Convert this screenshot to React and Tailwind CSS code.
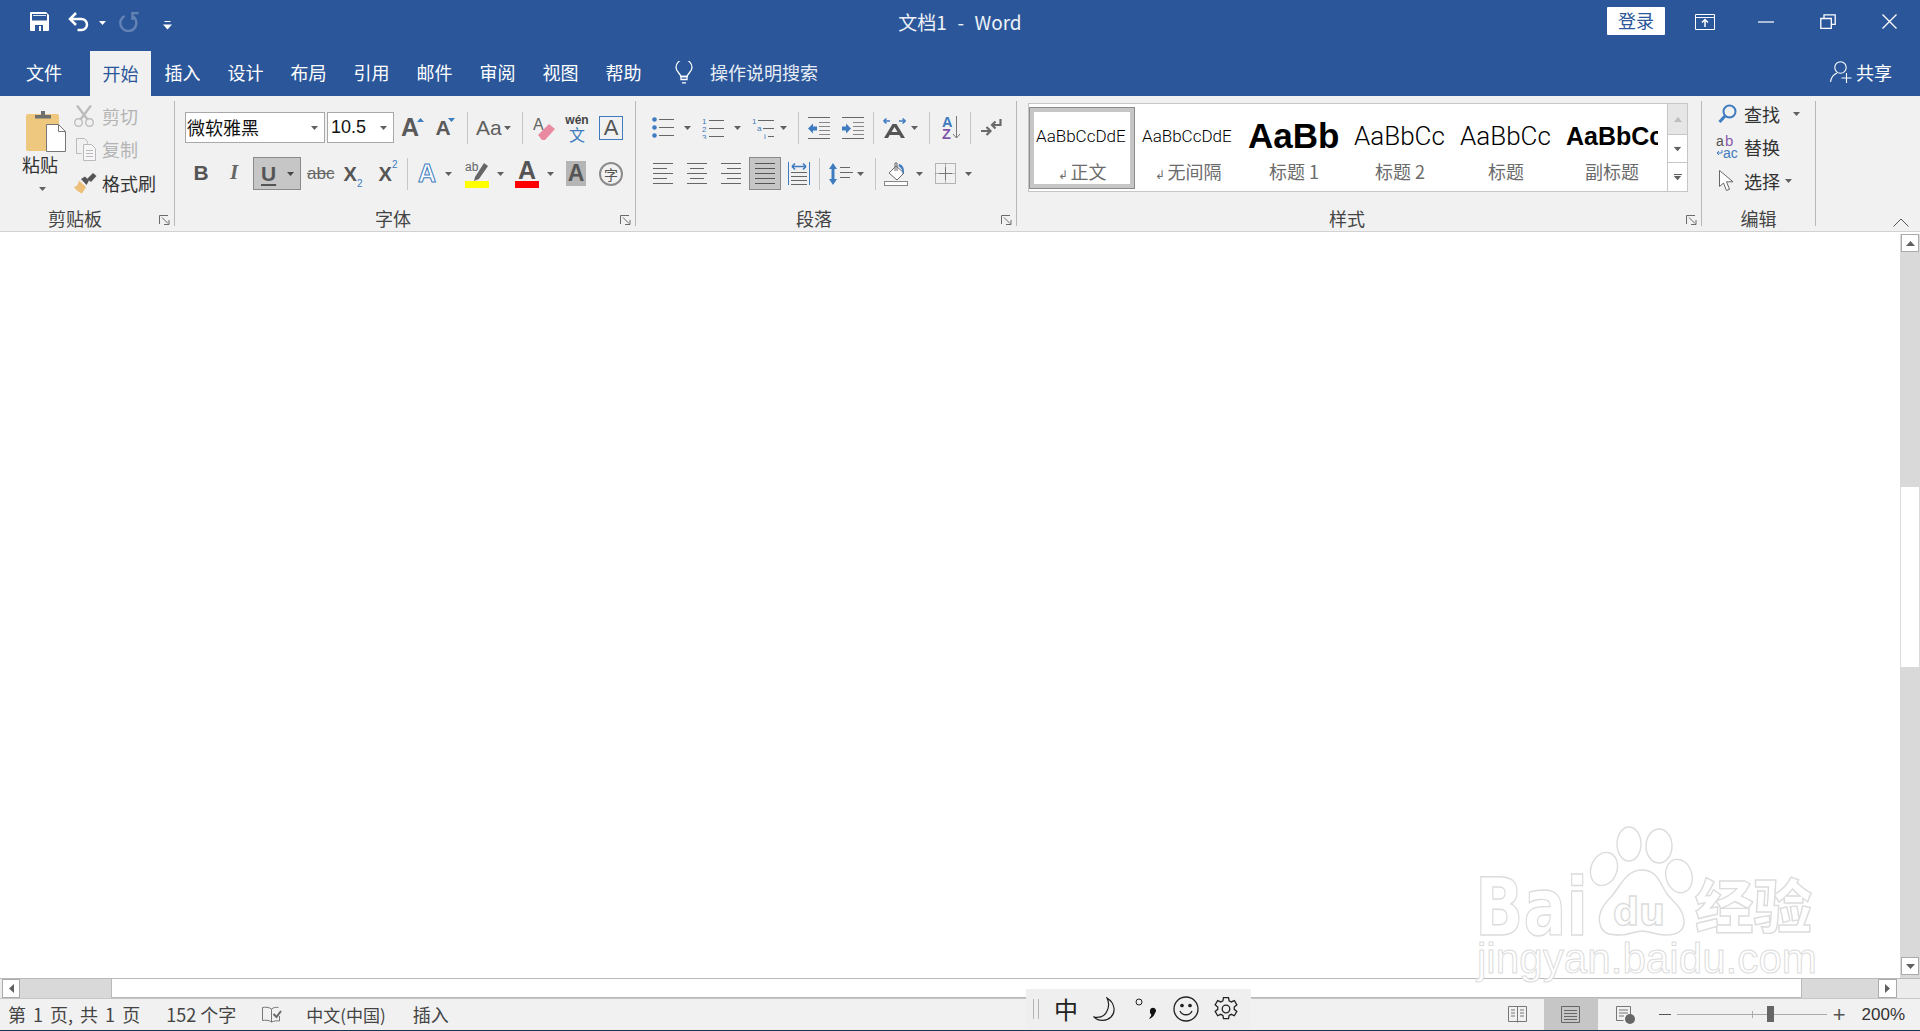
import React from "react";

const Caret = ({ className = "", color = "#606060" }) => (
  <svg width="7" height="4" viewBox="0 0 7 4" className={`shrink-0 ${className}`}>
    <path d="M0 0h7L3.5 4z" fill={color} />
  </svg>
);

const Sep = ({ className = "" }) => <div className={`w-px h-[32px] bg-[#c6c6c6] shrink-0 ${className}`} />;

const Launcher = () => (
  <svg width="11" height="10" viewBox="0 0 11 10" className="absolute right-[4px] top-[8px]">
    <path d="M.5 9V.5H9M3 2.5l6 6M5 9.5h5V5" fill="none" stroke="#6a6a6a" />
  </svg>
);

// one ribbon section with its caption at the bottom
function Group({ label, launcher, className, children }) {
  return (
    <div className={`h-[125px] mt-[5px] border-r border-[#b8b8b8] flex flex-col shrink-0 ${className}`}>
      {children}
      <div className={`relative mt-auto mb-[-3px] h-[22px] leading-[22px] text-center text-[18px] text-[#444] ${launcher ? "pr-[24px]" : ""}`}>
        {label}
        {launcher && <Launcher />}
      </div>
    </div>
  );
}

// horizontal rules used by the list and align icons
function Lines({ w = 20, h = 21, rows, color = "#666" }) {
  return (
    <svg width={w} height={h} viewBox={`0 0 ${w} ${h}`} className="shrink-0">
      {rows.map(([x1, x2, y], i) => (
        <path key={i} d={`M${x1} ${y + 0.5}H${x2}`} stroke={color} />
      ))}
    </svg>
  );
}

const leftRows = [[0, 20, 0], [0, 14, 5], [0, 20, 10], [0, 14, 15], [0, 20, 20]];
const centerRows = [[0, 20, 0], [3, 17, 5], [0, 20, 10], [3, 17, 15], [0, 20, 20]];
const rightRows = [[0, 20, 0], [6, 20, 5], [0, 20, 10], [6, 20, 15], [0, 20, 20]];

const Bullets = () => (
  <svg width="22" height="21" viewBox="0 0 22 21" className="shrink-0">
    {[2.5, 10.5, 18.5].map((y) => (
      <g key={y}>
        <circle cx="2.5" cy={y} r="2.3" fill="#3f7cbf" />
        <path d={`M7 ${y}H22`} stroke="#666" />
      </g>
    ))}
  </svg>
);

const Numbered = () => (
  <svg width="22" height="22" viewBox="0 0 22 22" className="shrink-0">
    {["1", "2", "3"].map((n, i) => (
      <g key={n}>
        <text x="0" y={6.5 + i * 8} fontSize="8" fontFamily="Liberation Sans" fill="#3f7cbf">{n}</text>
        <path d={`M7 ${3.5 + i * 8}H22`} stroke="#666" />
      </g>
    ))}
  </svg>
);

const Multilevel = () => (
  <svg width="22" height="22" viewBox="0 0 22 22" className="shrink-0">
    <text x="0" y="7" fontSize="8" fontFamily="Liberation Sans" fill="#3f7cbf">1</text>
    <path d="M6 3.5H22" stroke="#666" />
    <text x="5" y="14" fontSize="8" fontFamily="Liberation Sans" fill="#3f7cbf">a</text>
    <path d="M11 11.5H22" stroke="#666" />
    <text x="12" y="21.5" fontSize="8" fontFamily="Liberation Sans" fill="#3f7cbf">i</text>
    <path d="M16 19.5H22" stroke="#666" />
  </svg>
);

const Indent = ({ flip }) => (
  <svg width="22" height="22" viewBox="0 0 22 22" className="shrink-0">
    {[0.5, 21.5].map((y) => <path key={y} d={`M0 ${y}H22`} stroke="#666" />)}
    {[5.5, 9.5, 13.5, 17.5].map((y) => <path key={y} d={`M11 ${y}H22`} stroke="#888" />)}
    {flip ? (
      <path d="M0 9.5h4V6.5l5 5-5 5v-3H0z" fill="#3f7cbf" />
    ) : (
      <path d="M9 9.5H5V6.5l-5 5 5 5v-3h4z" fill="#3f7cbf" />
    )}
  </svg>
);

const TextDir = () => (
  <svg width="23" height="22" viewBox="0 0 23 22" className="shrink-0">
    <path d="M1 4h6M0.5 4l3-2.5M0.5 4l3 2.5M16 4h6.5M22.5 4l-3-2.5M22.5 4l-3 2.5" stroke="#3f7cbf" strokeWidth="1.6" fill="none" />
    <path d="M1 21L9.5 7h4L22 21h-4l-1.7-3H6.7L5 21zM8.5 15h6l-3-5z" fill="#555" />
  </svg>
);

const Sort = () => (
  <svg width="19" height="25" viewBox="0 0 19 25" className="shrink-0">
    <text x="0" y="11.500" fontSize="14.500" fontWeight="700" fontFamily="Liberation Sans" fill="#3f7cbf">A</text>
    <text x="0" y="24" fontSize="14.500" fontWeight="700" fontFamily="Liberation Sans" fill="#7f54a8">Z</text>
    <path d="M14.500 1v22M11 19l3.500 4 3.500-4" fill="none" stroke="#777" />
  </svg>
);

const ShowMarks = () => (
  <svg width="21" height="20" viewBox="0 0 21 20" className="shrink-0">
    <path d="M19.5 1v6H11M14.5 3.5L11 7l3.5 3.5" fill="none" stroke="#6a6a6a" strokeWidth="2.2" />
    <path d="M0 13h9M5.5 9l4 4-4 4" fill="none" stroke="#6a6a6a" strokeWidth="2.2" />
  </svg>
);

const Distributed = () => (
  <svg width="22" height="23" viewBox="0 0 22 23" className="shrink-0">
    <path d="M.5 0v23M21.5 0v23" stroke="#3f7cbf" />
    <path d="M4 4.5h14M4 4.5l3-3M4 4.5l3 3M18 4.5l-3-3M18 4.5l-3 3" fill="none" stroke="#3f7cbf" strokeWidth="1.6" />
    {[10.5, 14.5, 18.5, 22.5].map((y) => <path key={y} d={`M3 ${y}H19`} stroke="#666" />)}
  </svg>
);

const LineSpacing = () => (
  <svg width="24" height="24" viewBox="0 0 24 24" className="shrink-0">
    <path d="M4 1l4 6H5.5v10H8l-4 6-4-6h2.5V7H0z" fill="#3f7cbf" />
    {[5.5, 10.5, 15.5].map((y, i) => <path key={y} d={`M11 ${y}H${i === 1 ? 24 : 21}`} stroke="#666" />)}
  </svg>
);

const Shading = () => (
  <svg width="24" height="25" viewBox="0 0 24 25" className="shrink-0">
    <path d="M12 5l8 7-7 7-8-7z" fill="#fff" stroke="#666" />
    <path d="M11 10V2h2v8" fill="none" stroke="#666" />
    <path d="M15 3c4 1 5 4 5 8l-1.5 2c0-4-1-6-4-8z" fill="#3f7cbf" />
    <rect x=".5" y="20.5" width="23" height="4" fill="#fff" stroke="#888" />
  </svg>
);

const Borders = () => (
  <svg width="21" height="21" viewBox="0 0 21 21" className="shrink-0">
    <path d="M.5.5h20v20H.5zM10.5.5v20M.5 10.5h20" fill="none" stroke="#777" strokeDasharray="1 1" />
    <path d="M10.5 4v13M4 10.5h13" stroke="#777" />
  </svg>
);

const Paste = () => (
  <svg width="46" height="42" viewBox="0 0 46 42" className="shrink-0">
    <rect x="6" y="3" width="33" height="37" rx="2" fill="#edc87e" />
    <path d="M15 8V4.500h6V0h4v4.500h6V8z" fill="#6f6f6f" transform="translate(0 -.5)" />
    <path d="M26.500 13.500h12l7 7v20h-19z" fill="#fff" stroke="#777" />
    <path d="M38.500 13.500v7h7" fill="none" stroke="#777" />
  </svg>
);

const Scissors = () => (
  <svg width="20" height="22" viewBox="0 0 20 22" className="shrink-0">
    <path d="M3 .5L13.500 14.500M17 .5L6.500 14.500" stroke="#bcbcbc" strokeWidth="2.4" />
    <circle cx="4.500" cy="17.500" r="3.800" fill="none" stroke="#bcbcbc" strokeWidth="1.400" />
    <circle cx="15.500" cy="17.500" r="3.800" fill="none" stroke="#bcbcbc" strokeWidth="1.400" />
  </svg>
);

const CopyIcon = () => (
  <svg width="20" height="23" viewBox="0 0 20 23" className="shrink-0">
    <path d="M.5.5h8l3 3v2M.5.5v15h5" fill="none" stroke="#bdb8bd" />
    <path d="M7.500 6.500h8l4 4v12h-12zM10 12.500h7M10 15.500h7M10 18.500h7" fill="#f6f6f6" stroke="#bdb8bd" />
  </svg>
);

const Brush = () => (
  <svg width="23" height="21" viewBox="0 0 23 21" className="shrink-0">
    <path d="M5 7.500L12 14 8 20.500C5 19 1 17 0 13.500c3 .5 4-2 5-6z" fill="#edc07a" />
    <path d="M7 6l4-2.500 4 4-2.500 4.500z" fill="#555" />
    <path d="M13 6l6-6 3.500 3-5.500 6z" fill="#555" />
  </svg>
);

const Launch = {
  save: (
    <svg width="19" height="19" viewBox="0 0 19 19">
      <path d="M0 1a1 1 0 0 1 1-1h15l3 3v15a1 1 0 0 1-1 1H1a1 1 0 0 1-1-1z" fill="#fff" />
      <rect x="2" y="2" width="15" height="6.500" fill="#2b579a" />
      <rect x="3" y="3" width="13" height="1" fill="#dfe6f1" />
      <rect x="5" y="13" width="8" height="6" fill="#2b579a" />
      <rect x="9" y="14" width="2" height="5" fill="#fff" />
    </svg>
  ),
  undo: (
    <svg width="21" height="20" viewBox="0 0 21 20">
      <path d="M2 7h11.500a5.500 5.500 0 0 1 0 11H9.500" fill="none" stroke="#fff" strokeWidth="2.500" />
      <path d="M8 1L2 7l6 6" fill="none" stroke="#fff" strokeWidth="2.500" />
    </svg>
  ),
  redo: (
    <svg width="20" height="20" viewBox="0 0 20 20">
      <path d="M14 4.500a8 8 0 1 1-8.500-.5" fill="none" stroke="#6483b4" strokeWidth="2.400" />
      <path d="M13.500 0v8M13.500 1h6" fill="none" stroke="#6483b4" strokeWidth="2.400" />
    </svg>
  ),
  custom: (
    <svg width="9" height="9" viewBox="0 0 9 9">
      <path d="M1.500 .5h6" stroke="#fff" />
      <path d="M0 3.500h9L4.500 8.500z" fill="#fff" />
    </svg>
  ),
  ribbon: (
    <svg width="20" height="16" viewBox="0 0 20 16">
      <path d="M.5.500h19v15H.5zM.5 3.500h19" fill="none" stroke="#fff" />
      <path d="M10 13V6M7 8.500l3-3 3 3" fill="none" stroke="#fff" strokeWidth="1.500" />
    </svg>
  ),
  min: (
    <svg width="16" height="2" viewBox="0 0 16 2"><path d="M0 1h16" stroke="#fff" strokeWidth="1.200" /></svg>
  ),
  restore: (
    <svg width="16" height="15" viewBox="0 0 16 15">
      <path d="M.8 4.500h10.500v9.800H.8z" fill="none" stroke="#fff" strokeWidth="1.300" />
      <path d="M4 4.500V.8h11.200v9.500h-3.900" fill="none" stroke="#fff" strokeWidth="1.300" />
    </svg>
  ),
  close: (
    <svg width="15" height="15" viewBox="0 0 15 15"><path d="M.5.500l14 14M14.500.500l-14 14" stroke="#fff" strokeWidth="1.300" /></svg>
  ),
  bulb: (
    <svg width="18" height="23" viewBox="0 0 18 23">
      <path d="M6 15.500C5 12 1 10.500 1 6.500a8 8 0 0 1 16 0c0 4-4 5.500-5 9z" fill="none" stroke="#fff" strokeWidth="1.300" />
      <path d="M6 15.500h6v3H6zM7 21.800h4" fill="none" stroke="#fff" strokeWidth="1.300" />
    </svg>
  ),
  person: (
    <svg width="22" height="22" viewBox="0 0 22 22">
      <circle cx="10.500" cy="6.500" r="5.700" fill="none" stroke="#fff" strokeWidth="1.100" />
      <path d="M.5 21c.5-4 3-7.500 6.500-9M16.500 12v10M11.500 17h10" fill="none" stroke="#fff" strokeWidth="1.100" />
    </svg>
  ),
};

function Titlebar() {
  return (
    <div className="h-[51px] grid grid-cols-[1fr_auto_1fr] shrink-0 text-white">
      <div className="flex items-start">
        <div className="ml-[30px] mt-[12px]">{Launch.save}</div>
        <div className="ml-[19px] mt-[12px]">{Launch.undo}</div>
        <Caret color="#fff" className="ml-[10px] mt-[21px]" />
        <div className="ml-[13px] mt-[12px]">{Launch.redo}</div>
        <div className="ml-[24px] mt-[21px]">{Launch.custom}</div>
      </div>
      <div className="h-[45px] flex items-center text-[19px] whitespace-pre text-[#eef2f8] [word-spacing:1px]">文档1  -  Word</div>
      <div className="flex items-start justify-end pr-[23px]">
        <div className="mt-[7px] w-[58px] h-[28px] bg-white rounded-[1px] text-[#2b579a] text-[18px] leading-[26px] text-center">登录</div>
        <div className="ml-[30px] mt-[14px]">{Launch.ribbon}</div>
        <div className="ml-[43px] mt-[21px]">{Launch.min}</div>
        <div className="ml-[46px] mt-[14px]">{Launch.restore}</div>
        <div className="ml-[46px] mt-[14px]">{Launch.close}</div>
      </div>
    </div>
  );
}

const tabs = ["插入", "设计", "布局", "引用", "邮件", "审阅", "视图", "帮助"];

function Tabs() {
  return (
    <div className="h-[45px] flex items-center shrink-0 text-white text-[18px] pb-[3px]">
      <div className="w-[88px] text-center">文件</div>
      <div className="ml-[2px] w-[61px] h-[45px] self-start bg-[#f1f1f1] text-[#2b579a] flex items-center justify-center">开始</div>
      {tabs.map((t) => (
        <div key={t} className="w-[63px] text-center">{t}</div>
      ))}
      <div className="ml-[20px] flex items-center">{Launch.bulb}</div>
      <div className="ml-[17px] text-[#e9eef6]">操作说明搜索</div>
      <div className="ml-auto flex items-center pr-[28px]">
        {Launch.person}
        <span className="ml-[4px]">共享</span>
      </div>
    </div>
  );
}

const latin = "font-['Liberation_Sans',sans-serif]";

function Clipboard() {
  return (
    <Group label="剪贴板" launcher className="w-[175px]">
      <div className="flex">
        <div className="ml-[10px] w-[60px] flex flex-col items-center">
          <div className="mt-[10px] ml-[6px]"><Paste /></div>
          <div className="mt-[-1px] h-[24px] leading-[24px] text-[18px] text-[#333]">粘贴</div>
          <Caret className="mt-[11px] ml-[4px]" />
        </div>
        <div className="ml-[4px] mt-[1px] flex flex-col text-[18px]">
          <div className="h-[28px] flex items-center text-[#b4b4b4]">
            <div className="w-[24px]"><Scissors /></div><span className="ml-[4px]">剪切</span>
          </div>
          <div className="mt-[5px] h-[28px] flex items-center text-[#b4b4b4]">
            <div className="w-[24px] pl-[2px]"><CopyIcon /></div><span className="ml-[4px]">复制</span>
          </div>
          <div className="mt-[6px] h-[28px] flex items-center text-[#333]">
            <div className="w-[24px]"><Brush /></div><span className="ml-[4px]">格式刷</span>
          </div>
        </div>
      </div>
    </Group>
  );
}

function Font() {
  return (
    <Group label="字体" launcher className="w-[461px]">
      <div className="mt-[11px] h-[31px] flex items-center">
        <div className="ml-[10px] w-[140px] h-full bg-white border border-[#a8a8a8] flex items-center pl-[1px] pr-[6px] text-[18px] text-[#111]">
          微软雅黑<Caret className="ml-auto" />
        </div>
        <div className={`ml-[2px] w-[67px] h-full bg-white border border-[#a8a8a8] flex items-center pl-[3px] pr-[6px] text-[18px] text-[#111] ${latin}`}>
          10.5<Caret className="ml-auto" />
        </div>
        <div className={`relative ml-[2px] w-[28px] h-full flex items-center justify-center text-[25px] font-bold text-[#5a5a5a] ${latin}`}>
          A<svg width="7" height="4" className="absolute right-0 top-[6px]"><path d="M0 4h7L3.500 0z" fill="#3f7cbf" /></svg>
        </div>
        <div className={`relative ml-[7px] w-[24px] h-full flex items-center justify-center text-[21px] font-bold text-[#5a5a5a] ${latin}`}>
          A<svg width="7" height="4" className="absolute right-0 top-[6px]"><path d="M0 0h7L3.500 4z" fill="#3f7cbf" /></svg>
        </div>
        <Sep className="ml-[12px]" />
        <div className={`ml-[8px] w-[36px] flex items-center text-[21px] text-[#5f5f5f] ${latin}`}>
          Aa<Caret className="ml-[2px]" />
        </div>
        <Sep className="ml-[10px]" />
        <div className="ml-[10px] w-[24px] h-[26px]">
          <svg width="24" height="26" viewBox="0 0 24 26">
            <text x="0" y="15" fontSize="16" fontFamily="Liberation Sans" fill="#666">A</text>
            <path d="M5 20l11-11 6 5-10 11h-3z" fill="#e98aa0" />
          </svg>
        </div>
        <div className="ml-[8px] w-[24px] flex flex-col items-center text-[#444]">
          <span className={`h-[12px] leading-[12px] text-[12px] font-bold ${latin}`}>wén</span>
          <span className="h-[16px] leading-[16px] text-[16px] text-[#3f7cbf]">文</span>
        </div>
        <div className={`ml-[10px] w-[24px] h-[24px] border border-[#3f7cbf] flex items-center justify-center text-[22px] text-[#555] ${latin}`}>A</div>
      </div>
      <div className={`mt-[14px] h-[33px] flex items-center ${latin}`}>
        <div className="ml-[14px] w-[24px] mt-[-2px] text-center text-[21px] font-bold text-[#555]">B</div>
        <div className="ml-[9px] w-[24px] mt-[-2px] text-center text-[21px] font-bold italic text-[#666] font-['Liberation_Serif',serif]">I</div>
        <div className="ml-[7px] w-[48px] h-full bg-[#c6c6c6] border border-[#8a8a8a] flex items-center text-[21px] font-bold text-[#555]">
          <span className="ml-[7px] underline underline-offset-[3px]">U</span>
          <Caret className="ml-auto mr-[6px]" color="#444" />
        </div>
        <div className="ml-[6px] w-[24px] text-center text-[17px] text-[#666] line-through">abc</div>
        <div className="ml-[10px] w-[24px] text-[20px] font-bold text-[#555] flex items-end justify-center">
          X<span className="text-[10px] font-normal text-[#3f7cbf] mb-[-2px]">2</span>
        </div>
        <div className="ml-[11px] w-[24px] text-[20px] font-bold text-[#555] flex justify-center">
          X<span className="text-[10px] font-normal text-[#3f7cbf] mt-[-2px]">2</span>
        </div>
        <Sep className="ml-[7px]" />
        <div className="ml-[7px] w-[24px] text-center text-[25px] font-bold text-white [-webkit-text-stroke:1px_#3f7cbf]">A</div>
        <Caret className="ml-[6px]" />
        <div className="ml-[13px] w-[24px] h-[28px]">
          <svg width="24" height="28" viewBox="0 0 24 28">
            <text x="0" y="11" fontSize="12" fontFamily="Liberation Sans" fill="#666">ab</text>
            <path d="M10 17L19 3l4 3-9 13-5 2z" fill="#666" />
            <rect y="21" width="24" height="7" fill="#ffff00" />
          </svg>
        </div>
        <Caret className="ml-[8px]" />
        <div className="ml-[11px] w-[24px] flex flex-col items-center text-[25px] leading-[22px] font-bold text-[#555]">
          A<div className="w-[24px] h-[7px] bg-[#ff0000]" />
        </div>
        <Caret className="ml-[8px]" />
        <div className="ml-[12px] w-[20px] h-[25px] bg-[#b5b5b5] text-center text-[23px] leading-[25px] font-bold text-[#555]">A</div>
        <div className="ml-[13px] w-[24px] h-[24px] rounded-full border-2 border-[#8c8c8c] text-center text-[14px] leading-[20px] text-[#555] font-['Noto_Sans_CJK_SC',sans-serif]">字</div>
      </div>
    </Group>
  );
}

function Paragraph() {
  return (
    <Group label="段落" launcher className="w-[381px]">
      <div className="mt-[11px] h-[31px] flex items-center">
        <div className="ml-[16px]"><Bullets /></div>
        <Caret className="ml-[10px]" />
        <div className="ml-[11px]"><Numbered /></div>
        <Caret className="ml-[10px]" />
        <div className="ml-[11px]"><Multilevel /></div>
        <Caret className="ml-[6px]" />
        <Sep className="ml-[11px]" />
        <div className="ml-[9px]"><Indent /></div>
        <div className="ml-[12px]"><Indent flip /></div>
        <Sep className="ml-[9px]" />
        <div className="ml-[9px]"><TextDir /></div>
        <Caret className="ml-[5px]" />
        <Sep className="ml-[11px]" />
        <div className="ml-[12px]"><Sort /></div>
        <Sep className="ml-[9px]" />
        <div className="ml-[10px]"><ShowMarks /></div>
      </div>
      <div className="mt-[14px] h-[33px] flex items-center">
        <div className="ml-[17px]"><Lines rows={leftRows} /></div>
        <div className="ml-[14px]"><Lines rows={centerRows} /></div>
        <div className="ml-[14px]"><Lines rows={rightRows} /></div>
        <div className="ml-[8px] w-[32px] h-full bg-[#c6c6c6] border border-[#8a8a8a] flex items-center justify-center">
          <Lines rows={leftRows.map(([x1, , y]) => [x1, 20, y])} color="#555" />
        </div>
        <div className="ml-[7px]"><Distributed /></div>
        <Sep className="ml-[9px]" />
        <div className="ml-[9px]"><LineSpacing /></div>
        <Caret className="ml-[4px]" />
        <Sep className="ml-[11px]" />
        <div className="ml-[8px]"><Shading /></div>
        <Caret className="ml-[8px]" />
        <div className="ml-[12px]"><Borders /></div>
        <Caret className="ml-[9px]" />
      </div>
    </Group>
  );
}

const roboto = "font-['Roboto',sans-serif] font-light";

const styleItems = [
  { sample: "AaBbCcDdE", label: "正文", mark: true, cls: `${roboto} text-[17px]`, active: true },
  { sample: "AaBbCcDdE", label: "无间隔", mark: true, cls: `${roboto} text-[17px]` },
  { sample: "AaBbC", label: "标题 1", cls: `${latin} text-[35px] font-bold` },
  { sample: "AaBbCc", label: "标题 2", cls: `${roboto} text-[26px]` },
  { sample: "AaBbCc", label: "标题", cls: `${roboto} text-[26px]` },
  { sample: "AaBbCc", label: "副标题", cls: `${latin} text-[25px] font-bold` },
];

function Styles() {
  return (
    <Group label="样式" launcher className="w-[685px]">
      <div className="ml-[11px] mt-[2px] w-[660px] h-[89px] bg-white border border-[#c6c6c6] flex">
        {styleItems.map((s) => (
          <div
            key={s.label}
            className={`w-[106px] h-[82px] mt-[3px] border-[5px] flex flex-col items-center ${
              s.active ? "border-[#c6c6c6] outline outline-1 -outline-offset-1 outline-[#8c8c8c]" : "border-transparent"
            }`}
          >
            <div className={`w-[92px] h-[48px] overflow-hidden whitespace-nowrap leading-[48px] text-black ${s.cls}`}>
              {s.sample}
            </div>
            <div className="h-[24px] leading-[22px] text-[18px] text-[#6b6b6b]">
              {s.mark && <span className="text-[12px] mr-[3px]">↲</span>}
              {s.label}
            </div>
          </div>
        ))}
        <div className="ml-[2px] flex-1 flex flex-col border-l border-[#c6c6c6]">
          <div className="h-[31px] bg-[#e6e6e6] border-b border-[#c6c6c6] flex items-center justify-center">
            <svg width="8" height="5"><path d="M0 5h8L4 0z" fill="#bdbdbd" /></svg>
          </div>
          <div className="h-[28px] border-b border-[#c6c6c6] flex items-center justify-center">
            <Caret className="scale-110" />
          </div>
          <div className="flex-1 flex flex-col items-center justify-center gap-[1px]">
            <div className="w-[8px] h-px bg-[#606060]" />
            <Caret className="scale-110" />
          </div>
        </div>
      </div>
    </Group>
  );
}

function Editing() {
  return (
    <Group label="编辑" className="w-[114px]">
      <div className="ml-[14px] -mt-[1px] flex flex-col text-[18px] text-[#333]">
        <div className="h-[28px] flex items-center">
          <div className="w-[24px] pl-[2px]">
            <svg width="19" height="20" viewBox="0 0 19 20">
              <circle cx="11.500" cy="7.500" r="6" fill="none" stroke="#3f7cbf" strokeWidth="2" />
              <path d="M7 12l-5.500 6" stroke="#3f7cbf" strokeWidth="3" />
            </svg>
          </div>
          <span className="ml-[4px]">查找</span>
          <Caret className="ml-[13px]" />
        </div>
        <div className="mt-[5px] h-[28px] flex items-center">
          <div className="w-[24px]">
            <svg width="23" height="24" viewBox="0 0 23 24">
              <text x="0" y="11" fontSize="14" fontFamily="Liberation Sans" fill="#555">a</text>
              <text x="9" y="11" fontSize="15" fontFamily="Liberation Sans" fill="#8a5aa8">b</text>
              <text x="7" y="23" fontSize="14" fontFamily="Liberation Sans" fill="#3f7cbf">ac</text>
              <path d="M6 15v3H1M3 16l-2 2 2 2" fill="none" stroke="#3f7cbf" />
            </svg>
          </div>
          <span className="ml-[4px]">替换</span>
        </div>
        <div className="mt-[6px] h-[28px] flex items-center">
          <div className="w-[24px]">
            <svg width="15" height="22" viewBox="0 0 15 22" className="ml-[3px]">
              <path d="M.5.500v16l4-3.500 3 7.500 3-1.200-3-7.500h6.500z" fill="#fff" stroke="#666" />
            </svg>
          </div>
          <span className="ml-[4px]">选择</span>
          <Caret className="ml-[5px]" />
        </div>
      </div>
    </Group>
  );
}

function Ribbon() {
  return (
    <div className="h-[136px] bg-[#f1f1f1] border-b border-[#d2d2d2] flex shrink-0">
      <Clipboard />
      <Font />
      <Paragraph />
      <Styles />
      <Editing />
      <div className="flex-1 flex items-end justify-end pr-[11px] pb-[4px]">
        <svg width="16" height="9" viewBox="0 0 16 9"><path d="M.5 8.500L8 1l7.500 7.500" fill="none" stroke="#555" /></svg>
      </div>
    </div>
  );
}

const ScrollBtn = ({ children, className = "" }) => (
  <div className={`bg-white border border-[#ababab] flex items-center justify-center shrink-0 ${className}`}>{children}</div>
);

function Document() {
  return (
    <div className="flex-1 flex min-h-0">
      <div className="flex-1 bg-white" />
      <div className="w-[20px] bg-[#d9d9d9] flex flex-col items-center">
        <div className="w-full h-[2px] bg-white" />
        <ScrollBtn className="w-[18px] h-[18px]">
          <svg width="9" height="5"><path d="M0 5h9L4.500 0z" fill="#606060" /></svg>
        </ScrollBtn>
        <div className="h-[235px] shrink-0" />
        <div className="w-[18px] h-[180px] bg-white shrink-0" />
        <div className="flex-1" />
        <ScrollBtn className="w-[18px] h-[18px] mb-[3px]">
          <svg width="9" height="5"><path d="M0 0h9L4.500 5z" fill="#606060" /></svg>
        </ScrollBtn>
      </div>
    </div>
  );
}

function HScroll() {
  return (
    <div className="h-[20px] bg-[#ececec] flex items-stretch shrink-0 border-t border-[#b9b9b9]">
      <ScrollBtn className="ml-[2px] w-[18px]">
        <svg width="5" height="9"><path d="M5 0v9L0 4.500z" fill="#606060" /></svg>
      </ScrollBtn>
      <div className="w-[91px] bg-[#d9d9d9]" />
      <div className="w-[1691px] bg-white border-x border-b border-[#b9b9b9]" />
      <div className="w-[76px] bg-[#d9d9d9]" />
      <ScrollBtn className="w-[19px]">
        <svg width="5" height="9"><path d="M0 0v9l5-4.500z" fill="#606060" /></svg>
      </ScrollBtn>
    </div>
  );
}

function StatusBar() {
  return (
    <div className="h-[32px] bg-[#f1f1f1] border-t border-[#c6c6c6] flex items-center shrink-0 text-[18px] text-[#444]">
      <span className="ml-[8px] whitespace-pre [word-spacing:3px]">第 1 页, 共 1 页</span>
      <span className="ml-[26px] whitespace-pre">152 个字</span>
      <svg width="20" height="18" viewBox="0 0 20 18" className="ml-[26px]">
        <path d="M9.500 3C7 1 3 1 .5 1.500v13c2.500-.5 6.500-.5 9 1.500V3zM9.500 3c2-1.500 4-2 7-1.500M17.500 10v5c-3-.5-5.500 0-8 1" fill="none" stroke="#777" />
        <path d="M11.500 8l3 3 4.500-6" fill="none" stroke="#666" strokeWidth="2" />
      </svg>
      <span className="ml-[24px] text-[17px]">中文(中国)</span>
      <span className="ml-[27px]">插入</span>
      <div className="ml-auto flex items-center h-full">
        <svg width="19" height="17" viewBox="0 0 19 17">
          <path d="M.5.500h18v15h-18zM9.500.500v16M3 4h4M3 7h4M3 10h4M12 4h4M12 7h4M12 10h4" fill="none" stroke="#777" />
        </svg>
        <div className="ml-[17px] w-[54px] h-full bg-[#c6c6c6] flex items-center justify-center">
          <svg width="19" height="17" viewBox="0 0 19 17">
            <path d="M.5.500h18v16H.5zM3 4.500h13M3 7.500h13M3 10.500h13M3 13.500h13" fill="none" stroke="#666" />
          </svg>
        </div>
        <svg width="20" height="18" viewBox="0 0 20 18" className="ml-[18px]">
          <path d="M14.500 8V.500H.5v14h7M3 4h9M3 7h9M3 10h5" fill="none" stroke="#777" />
          <circle cx="14" cy="13" r="5" fill="#666" />
        </svg>
        <div className="ml-[23px] w-[12px] h-[1.5px] bg-[#555]" />
        <div className="relative ml-[6px] w-[150px] h-px bg-[#aaa]">
          <div className="absolute left-[75px] top-[-3px] w-px h-[7px] bg-[#aaa]" />
          <div className="absolute left-[90px] top-[-8px] w-[7px] h-[16px] bg-[#666]" />
        </div>
        <span className="ml-[6px] text-[22px] font-light leading-none text-[#555] font-['Liberation_Sans',sans-serif]">+</span>
        <span className="ml-[16px] mr-[15px] text-[17px] text-[#333] font-['Liberation_Sans',sans-serif]">200%</span>
      </div>
    </div>
  );
}

// floating IME toolbar that sits over the status bar
function ImeBar() {
  return (
    <div className="absolute left-[1026px] top-[989px] w-[225px] h-[40px] bg-[#efefef] flex items-center text-[#222]">
      <div className="ml-[7px] w-[6px] h-[20px] border-x border-[#b5b5b5]" />
      <span className="ml-[15px] w-[24px] text-center text-[24px] leading-none">中</span>
      <svg width="24" height="25" viewBox="0 0 24 25" className="ml-[15px]" fill="none" stroke="#222" strokeWidth="1.200">
        <path d="M14 1c8 5 9 14 4 19-4 4-12 5-17 0 6 1 11-1 13-6 2-4 2-9 0-13z" />
      </svg>
      <svg width="22" height="24" viewBox="0 0 22 24" className="ml-[18px]">
        <circle cx="4" cy="5" r="3" fill="none" stroke="#222" />
        <path d="M15 14a3 3 0 1 1 5 2c-1 3-3 5-6 6 1-2 3-4 2-5-1 0-1-2-1-3z" fill="#111" />
      </svg>
      <svg width="26" height="26" viewBox="0 0 26 26" className="ml-[16px]" fill="none" stroke="#222" strokeWidth="1.300">
        <circle cx="13" cy="13" r="12" />
        <path d="M7 15c2 5 10 5 12 0" />
        <circle cx="9" cy="9.500" r="1.200" fill="#222" />
        <circle cx="17" cy="9.500" r="1.200" fill="#222" />
      </svg>
      <svg width="26" height="26" viewBox="0 0 24 24" className="ml-[14px]" fill="none" stroke="#222" strokeWidth="1.200">
        <path d="M9.700 1.500h4.600l.6 3 2 1 2.800-1.300 2.300 4-2.400 1.900v2.200l2.400 1.900-2.300 4-2.800-1.300-2 1-.6 3H9.700l-.6-3-2-1-2.800 1.300-2.300-4 2.400-1.900v-2.200L2 8.200l2.300-4 2.800 1.300 2-1z" />
        <circle cx="12" cy="12" r="3.500" />
      </svg>
    </div>
  );
}

// faint site watermark over the bottom right corner
function Watermark() {
  const t = { fill: "#fff", stroke: "#dcdcdc", strokeWidth: 1.4 };
  return (
    <svg width="360" height="170" viewBox="0 0 360 170" className="absolute left-[1470px] top-[820px] pointer-events-none">
      <text x="5" y="115" fontSize="80" fontWeight="700" fontFamily="DejaVu Sans" textLength="113" lengthAdjust="spacingAndGlyphs" {...t}>Bai</text>
      <ellipse cx="159" cy="24" rx="12" ry="17" {...t} />
      <ellipse cx="189" cy="26" rx="13" ry="17" {...t} />
      <ellipse cx="134" cy="49" rx="13" ry="17" transform="rotate(20 134 49)" {...t} />
      <ellipse cx="209" cy="56" rx="13" ry="17" transform="rotate(-15 209 56)" {...t} />
      <path d="M172 50C155 50 150 68 140 78 130 88 128 96 130 104 132 114 140 115 150 115 160 115 165 111 172 111 180 111 185 115 196 115 208 115 215 110 214 100 213 88 203 82 197 74 190 64 188 50 172 50Z" {...t} />
      <text x="143" y="105" fontSize="37" fontWeight="700" fontFamily="DejaVu Sans" textLength="52" lengthAdjust="spacingAndGlyphs" {...t}>du</text>
      <text x="225" y="108" fontSize="58" fontWeight="900" fontFamily="Noto Sans CJK SC" textLength="117" lengthAdjust="spacingAndGlyphs" {...t}>经验</text>
      <text x="7" y="153" fontSize="43" fontFamily="Liberation Sans" textLength="340" lengthAdjust="spacingAndGlyphs" {...t} strokeWidth="1">jingyan.baidu.com</text>
    </svg>
  );
}

export default function App() {
  return (
    <div className="relative h-screen flex flex-col overflow-hidden bg-[#2b579a] font-['Noto_Sans_CJK_SC','Liberation_Sans',sans-serif]">
      <Titlebar />
      <Tabs />
      <Ribbon />
      <Document />
      <HScroll />
      <StatusBar />
      <div className="h-px bg-[#16384f] shrink-0" />
      <ImeBar />
      <Watermark />
    </div>
  );
}
